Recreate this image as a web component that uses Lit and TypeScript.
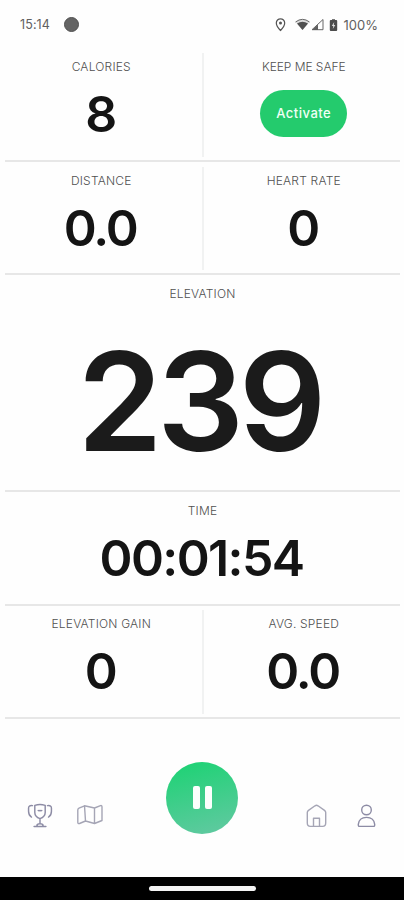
import { LitElement, html, css, svg } from "lit";
import { customElement, property } from "lit/decorators.js";

@customElement("metric-cell")
class MetricCell extends LitElement {
  @property() label = "";
  @property() value = "";
  @property({ reflect: true }) size = "normal";
  static styles = css`
    :host { display: flex; flex-direction: column; align-items: center; flex: 1; min-width: 0; color: #141414; }
    .label { font-size: 12px; line-height: 16px; margin-top: 11px; color: #505050; font-weight: 300; letter-spacing: var(--label-space, .2px); white-space: nowrap; }
    .value { font-size: 50px; line-height: 60px; font-weight: 600; margin-top: 9px; letter-spacing: var(--value-space, -2px); margin-right: 2px; white-space: nowrap; }
    :host([size="large"]) .value { font-size: 137px; line-height: 160px; margin-top: 19px; letter-spacing: -5.5px; margin-right: 7px; color: #1b1b1b; }
  `;
  render() {
    return html`<div class="label">${this.label}</div>
      ${this.value ? html`<div class="value">${this.value}</div>` : html`<slot></slot>`}`;
  }
}

const icons = {
  trophy: svg`<path d="M7 3.2Q12 1.6 17 3.2V10Q17 14 12 16Q7 14 7 10ZM12 16V21M9 23Q9 21 12 21Q15 21 15 23M6.3 23.5H17.7M4.8 3.5Q.8 3 1 6V9Q1 13 3.8 14.5M19.2 3.5Q23.2 3 23 6V9Q23 13 20.2 14.5M10.3 8.2Q11 8.8 11.5 8.2M12.5 8.2Q13 8.8 13.7 8.2"/>`,
  map: svg`<path d="M2 5.2L7.5 2.8L17.5 5L23.5 2.6Q25 2.2 25 4V17.5L17.5 20.5L8.5 18L2.5 20.5Q.8 21 .8 19.2V7Q.8 5.7 2 5.2ZM7.5 2.8L8.5 18M17.5 5V20.5"/>`,
  home: svg`<path d="M2.8 9.6Q2.8 8.3 4 7.4L10.5 2.8Q12 1.8 13.5 2.8L20 7.4Q21.2 8.3 21.2 9.6V20Q21.2 23.4 18.2 23.4H5.8Q2.8 23.4 2.8 20ZM9 23.4V15.2H15V23.4"/>`,
  user: svg`<circle cx="12" cy="7" r="4.8"/><path d="M5 23.4Q3.6 23.4 3.8 21.4Q4.6 14.4 12 14.4Q19.4 14.4 20.2 21.4Q20.4 23.4 19 23.4Z"/>`,
};

@customElement("app-root")
class AppRoot extends LitElement {
  static styles = css`
    :host { display: flex; flex-direction: column; width: 404px; height: 900px; background: #fefefe; font-family: Inter, "Liberation Sans", sans-serif; overflow: hidden; }
    * { box-sizing: border-box; }
    .status { height: 48px; flex: none; display: flex; align-items: center; padding: 1px 26px 0 20px; color: #606060; font-size: 12.5px; }
    .clock { letter-spacing: .1px; width: 44px; }
    .dot { width: 15px; height: 15px; border-radius: 50%; background: #646464; border: 1px solid #505050; }
    .indicators { margin-left: auto; display: flex; align-items: center; }
    .indicators svg { display: block; }
    .percent { margin-left: 4px; font-size: 13px; letter-spacing: 0; }
    .grid { flex: none; }
    .row { display: flex; height: 111.3px; padding-left: 1px; }
    .row.first { height: 112px; }
    .row.tall { height: 215px; }
    .row.last { margin-top: -.6px; height: 111.9px; }
    .line { height: 2px; margin: 0 4px 0 5px; background: #e7e7e7; }
    .rule { width: 2px; margin: 5px 0 3px; background: #f1f2f2; }
    .activate { width: 87px; height: 47px; border: 0; border-radius: 24px; background: #24cb6d; color: #effff5; font: 500 13px Inter, sans-serif; letter-spacing: .5px; margin-top: 15px; padding: 0 0 1px; }
    .safe { --label-space: -.05px; }
    .time { --value-space: -1.6px; }
    .nav { flex: 1; display: flex; align-items: center; padding: 0 25px 0 27px; }
    .pair { display: flex; gap: 24px; margin-top: 35px; }
    .pair.left { margin-right: -2px; }
    .icon { width: 26px; height: 26px; fill: none; stroke: #8d8ca5; stroke-width: 1.4; stroke-linecap: round; stroke-linejoin: round; display: block; }
    .icon.light { stroke: #a5a5b5; }
    .icon.home, .icon.user { width: 25px; height: 25px; }
    .pair.right { gap: 25.5px; }
    .pause { width: 72px; height: 72px; margin: 0 auto; border-radius: 50%; border: 0; display: flex; align-items: center; justify-content: center; gap: 5.5px; background: linear-gradient(165deg, #20d276 8%, #61c9a1 96%); padding: 0; }
    .bar { width: 6.5px; height: 23px; border-radius: 2px; background: #fcfffd; }
    .system { height: 23px; flex: none; background: #000; display: flex; justify-content: center; align-items: center; }
    .handle { width: 107px; height: 5px; border-radius: 3px; background: #f4f4f4; }
  `;
  render() {
    const icon = (name: keyof typeof icons, light = false) => html`
      <svg class="icon ${name} ${light ? "light" : ""}" viewBox=${name === "map" ? "0 0 26 24" : "0 0 24 25"}>${icons[name]}</svg>`;
    return html`
      <div class="status">
        <span class="clock">15:14</span><span class="dot"></span>
        <div class="indicators">
          <svg width="65" height="16" viewBox="0 0 65 16">
            <path d="M5.5 13.5Q1.3 9.2 1.3 6A4.2 4.2 0 0 1 9.7 6Q9.7 9.2 5.5 13.5Z" fill="none" stroke="#555" stroke-width="1.2"/>
            <circle cx="5.5" cy="6" r="1.5" fill="#555"/>
            <path d="M20.5 5Q27.5 -.3 34.5 5L27.5 13Z" fill="#ddd"/>
            <path d="M20.5 5Q27.5 -.3 34.5 5" fill="none" stroke="#666" stroke-width="1"/>
            <path d="M22 6.5Q27.5 3 33 6.5L27.5 13Z" fill="#505050"/>
            <path d="M37 12.7L48 2.5V12.7Z" fill="none" stroke="#666" stroke-width="1"/>
            <path d="M37 13L43 7.4V13Z" fill="#606060"/>
            <path d="M57 3V2.2H60V3H61.2Q62.2 3 62.2 4V13Q62.2 14 61.2 14H55.8Q54.8 14 54.8 13V4Q54.8 3 55.8 3Z" fill="#4c4c4c"/>
            <path d="M59.2 5L56.8 9H58.3L57.8 12L60.3 8H58.8Z" fill="#ddd"/>
          </svg>
          <span class="percent">100%</span>
        </div>
      </div>
      <div class="grid">
        <div class="row first">
          <metric-cell label="CALORIES" value="8"></metric-cell><div class="rule"></div>
          <metric-cell class="safe" label="KEEP ME SAFE"><button class="activate">Activate</button></metric-cell>
        </div>
        <div class="line"></div>
        <div class="row">
          <metric-cell label="DISTANCE" value="0.0"></metric-cell><div class="rule"></div>
          <metric-cell label="HEART RATE" value="0"></metric-cell>
        </div>
        <div class="line"></div>
        <div class="row tall"><metric-cell size="large" label="ELEVATION" value="239"></metric-cell></div>
        <div class="line"></div>
        <div class="row"><metric-cell class="time" label="TIME" value="00:01:54"></metric-cell></div>
        <div class="line"></div>
        <div class="row last">
          <metric-cell label="ELEVATION GAIN" value="0"></metric-cell><div class="rule"></div>
          <metric-cell label="AVG. SPEED" value="0.0"></metric-cell>
        </div>
        <div class="line"></div>
      </div>
      <div class="nav">
        <div class="pair left">${icon("trophy")}${icon("map", true)}</div>
        <button class="pause" aria-label="Pause"><span class="bar"></span><span class="bar"></span></button>
        <div class="pair right">${icon("home", true)}${icon("user")}</div>
      </div>
      <div class="system"><div class="handle"></div></div>
    `;
  }
}
